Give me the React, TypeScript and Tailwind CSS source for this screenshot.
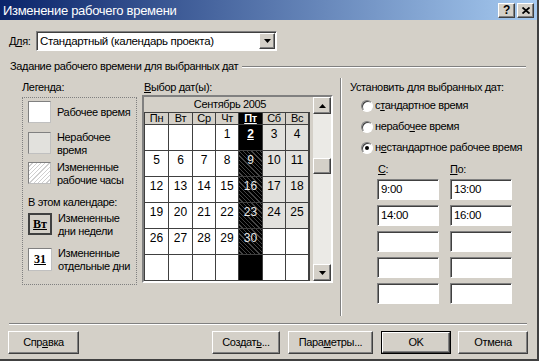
import React from 'react';

const raised =
  'bg-[#d4d0c8] border border-t-white border-l-white border-r-[#404040] border-b-[#404040] shadow-[inset_-1px_-1px_0_#808080]';
const sunken =
  'bg-white border border-t-[#808080] border-l-[#808080] border-r-white border-b-white shadow-[inset_1px_1px_0_#404040]';

const U: React.FC<{ children: React.ReactNode }> = ({ children }) => <span className="underline">{children}</span>;

const Arrow: React.FC<{ dir: 'up' | 'down' }> = ({ dir }) => (
  <svg width="7" height="4" viewBox="0 0 7 4">
    {dir === 'down' ? <polygon points="0,0 7,0 3.5,4" fill="#000" /> : <polygon points="0,4 7,4 3.5,0" fill="#000" />}
  </svg>
);

const weeks: (number | null)[][] = [
  [null, null, null, 1, 2, 3, 4],
  [5, 6, 7, 8, 9, 10, 11],
  [12, 13, 14, 15, 16, 17, 18],
  [19, 20, 21, 22, 23, 24, 25],
  [26, 27, 28, 29, 30, null, null],
  [null, null, null, null, null, null, null],
];
const dayNames = ['Пн', 'Вт', 'Ср', 'Чт', 'Пт', 'Сб', 'Вс'];

const hatchDark =
  'bg-[repeating-linear-gradient(45deg,#000_0px,#000_2px,#444_2px,#444_3px)] text-[#e8e8e8]';

function cellClass(day: number | null, col: number) {
  if (col === 4) {
    if (day === 2) return 'bg-black text-white font-bold underline';
    if (day) return hatchDark;
    return 'bg-black';
  }
  if (day && col >= 5) return 'bg-[#e2e1dd]';
  return 'bg-white';
}

const Calendar: React.FC = () => (
  <div className="mt-[1px] w-[191px] h-[188px] border-2 border-t-[#808080] border-l-[#808080] border-r-white border-b-white flex">
    <div className="flex flex-col w-[168px]">
      <div className="h-[16px] flex items-center justify-center pl-[4px]">Сентябрь 2005</div>
      <div className="grid grid-cols-[23px_23px_22px_22px_23px_22px_22px] grid-rows-[11px_repeat(6,25px)] gap-px bg-[#404040] border border-[#404040] w-[166px]">
        {dayNames.map((d, i) => (
          <div
            key={d}
            className={`flex items-center justify-center leading-none ${
              i === 4 ? 'bg-black text-white font-bold underline' : 'bg-[#d4d0c8]'
            }`}
          >
            {d}
          </div>
        ))}
        {weeks.flatMap((w, r) =>
          w.map((day, c) => (
            <div key={`${r}-${c}`} className={`flex justify-center pt-[3px] leading-none text-[12px] tracking-normal ${cellClass(day, c)}`}>
              {day ?? ''}
            </div>
          ))
        )}
      </div>
    </div>
    <div className="ml-[1px] w-[18px] h-[184px] bg-[#ebeae6] flex flex-col">
      <div className={`${raised} h-[17px] flex items-center justify-center`}>
        <Arrow dir="up" />
      </div>
      <div className="h-[44px]" />
      <div className={`${raised} h-[16px]`} />
      <div className="flex-1" />
      <div className={`${raised} h-[17px] flex items-center justify-center`}>
        <Arrow dir="down" />
      </div>
    </div>
  </div>
);

const LegendItem: React.FC<{ swatch: React.ReactNode; label: React.ReactNode; className?: string }> = ({
  swatch,
  label,
  className = '',
}) => (
  <div className={`flex items-start h-[23px] ${className}`}>
    {swatch}
    <div className="ml-[6px] leading-[13px] -mt-[1px] whitespace-nowrap">{label}</div>
  </div>
);

const swatchBase = 'w-[23px] h-[22px] border border-t-[#808080] border-l-[#808080] border-r-[#c0c0c0] border-b-[#c0c0c0] shrink-0';

const Legend: React.FC = () => (
  <div className="w-[115px] h-[188px] border border-dotted border-[#808080] pl-[5px] pt-[3px]">
    <LegendItem
      swatch={<div className={`${swatchBase} bg-white`} />}
      label={<div className="pt-[6px]">Рабочее время</div>}
    />
    <LegendItem className="mt-[8px]" swatch={<div className={`${swatchBase} bg-[#e2e1dd]`} />} label={<>Нерабочее<br />время</>} />
    <LegendItem
      className="mt-[7px]"
      swatch={
        <div className={`${swatchBase} bg-[repeating-linear-gradient(135deg,#fff_0px,#fff_2px,#cfcfcf_2px,#cfcfcf_3px)]`} />
      }
      label={<>Измененные<br />рабочие часы</>}
    />
    <div className="mt-[11px] leading-[13px]">В этом календаре:</div>
    <LegendItem
      className="mt-[4px]"
      swatch={
        <div className="w-[24px] h-[22px] border-2 border-[#404040] bg-[#d4d0c8] shrink-0 flex items-center justify-center font-['Liberation_Serif',serif] font-bold underline text-[12px] tracking-normal">
          Вт
        </div>
      }
      label={<>Измененные<br />дни недели</>}
    />
    <LegendItem
      className="mt-[12px]"
      swatch={
        <div className="w-[24px] h-[23px] border border-t-[#808080] border-l-[#808080] border-r-[#c0c0c0] border-b-[#c0c0c0] bg-white shrink-0 flex items-center justify-center font-['Liberation_Serif',serif] font-bold underline text-[12px] tracking-normal">
          31
        </div>
      }
      label={<>Измененные<br />отдельные дни</>}
    />
  </div>
);

const Radio: React.FC<{ checked?: boolean; children: React.ReactNode }> = ({ checked, children }) => (
  <div className="flex items-center h-[13px]">
    <div className="w-[12px] h-[12px] rounded-full bg-white border border-t-[#808080] border-l-[#808080] border-r-white border-b-white shadow-[inset_1px_1px_0_#404040] flex items-center justify-center">
      {checked && <div className="w-[4px] h-[4px] rounded-full bg-black" />}
    </div>
    <span className="ml-[2px]">{children}</span>
  </div>
);

const TimeField: React.FC<{ value?: string }> = ({ value = '' }) => (
  <div className={`${sunken} w-[62px] h-[21px] pl-[3px] flex items-center text-[11.5px]`}>{value}</div>
);

const Button: React.FC<{ w: string; def?: boolean; children: React.ReactNode }> = ({ w, def, children }) => (
  <div className={`${w} h-[23px] ${def ? 'border border-black' : ''}`}>
    <div className={`${raised} w-full h-full flex items-center justify-center`}>{children}</div>
  </div>
);

export default function App() {
  const rows: [string, string][] = [
    ['9:00', '13:00'],
    ['14:00', '16:00'],
    ['', ''],
    ['', ''],
    ['', ''],
  ];
  return (
    <div className="w-[539px] h-[361px] overflow-hidden bg-[#d4d0c8] text-black text-[11px] leading-[13px] tracking-[-0.35px] font-['Liberation_Sans',Arial,sans-serif] border-r-2 border-b-2 border-r-[#404040] border-b-[#404040] flex flex-col">
      {/* title bar */}
      <div className="h-[20px] shrink-0 flex items-center bg-[linear-gradient(to_right,#0a246a,#a6caf0)] pl-[3px] pr-[3px]">
        <span className="text-white text-[13px] leading-none tracking-[-0.3px]">Изменение рабочего времени</span>
        <div className="ml-auto flex gap-[2px]">
          <div className={`${raised} w-[17px] h-[15px] flex items-center justify-center font-bold text-[12px] leading-none`}>?</div>
          <div className={`${raised} w-[17px] h-[15px] flex items-center justify-center`}>
            <svg width="8" height="7" viewBox="0 0 8 7">
              <path d="M0.5 0.5 L7.5 6.5 M7.5 0.5 L0.5 6.5" stroke="#000" strokeWidth="1.8" />
            </svg>
          </div>
        </div>
      </div>

      {/* Для */}
      <div className="mt-[11px] flex items-center h-[20px]">
        <span className="ml-[9px] w-[27px]">
          Д<U>л</U>я:
        </span>
        <div className={`${sunken} w-[241px] h-[20px] flex items-center pl-[3px] text-[11.5px]`}>
          <span className="flex-1">Стандартный (календарь проекта)</span>
          <div className={`${raised} w-[16px] h-[16px] mr-[1px] flex items-center justify-center`}>
            <Arrow dir="down" />
          </div>
        </div>
      </div>

      {/* group header */}
      <div className="mt-[9px] flex items-center pl-[10px] pr-[11px]">
        <span>Задание рабочего времени для выбранных дат</span>
        <div className="flex-1 ml-[4px] border-t border-t-[#808080] border-b border-b-white" />
      </div>

      {/* main */}
      <div className="mt-[5px] flex h-[238px]">
        <div className="ml-[22px] flex flex-col pt-[3px]">
          <span>Легенда:</span>
          <div className="mt-[3px]">
            <Legend />
          </div>
        </div>
        <div className="ml-[5px] flex flex-col pt-[3px]">
          <span className="ml-[2px]">
            <U>В</U>ыбор дат(ы):
          </span>
          <Calendar />
        </div>
        <div className="ml-[7px] w-[2px] border-l border-l-[#808080] border-r border-r-white" />
        <div className="ml-[8px] flex flex-col pt-[3px]">
          <span>Установить для выбранных дат:</span>
          <div className="ml-[11px] mt-[5px] flex flex-col gap-[8px]">
            <Radio>
              с<U>т</U>андартное время
            </Radio>
            <Radio>
              нерабо<U>ч</U>ее время
            </Radio>
            <Radio checked>
              н<U>е</U>стандартное рабочее время
            </Radio>
          </div>
          <div className="ml-[27px] mt-[9px] grid grid-cols-[62px_62px] gap-x-[11px]">
            <span className="ml-[1px]">
              <U>С</U>:
            </span>
            <span>
              <U>П</U>о:
            </span>
          </div>
          <div className="ml-[27px] mt-[3px] grid grid-cols-[62px_62px] gap-x-[11px] gap-y-[5px]">
            {rows.map(([a, b], i) => (
              <React.Fragment key={i}>
                <TimeField value={a} />
                <TimeField value={b} />
              </React.Fragment>
            ))}
          </div>
        </div>
      </div>

      {/* separator */}
      <div className="mt-[7px] mx-[9px] w-[518px] border-t border-t-[#808080] border-b border-b-white" />

      {/* buttons */}
      <div className="mt-[6px] flex">
        <div className="ml-[8px]">
          <Button w="w-[71px]">
            Спр<U>а</U>вка
          </Button>
        </div>
        <div className="ml-[133px]">
          <Button w="w-[68px]">
            Создат<U>ь</U>...
          </Button>
        </div>
        <div className="ml-[8px]">
          <Button w="w-[85px]">
            Пара<U>м</U>етры...
          </Button>
        </div>
        <div className="ml-[8px]">
          <Button w="w-[70px]" def>
            OK
          </Button>
        </div>
        <div className="ml-[7px]">
          <Button w="w-[70px]">Отмена</Button>
        </div>
      </div>
    </div>
  );
}
